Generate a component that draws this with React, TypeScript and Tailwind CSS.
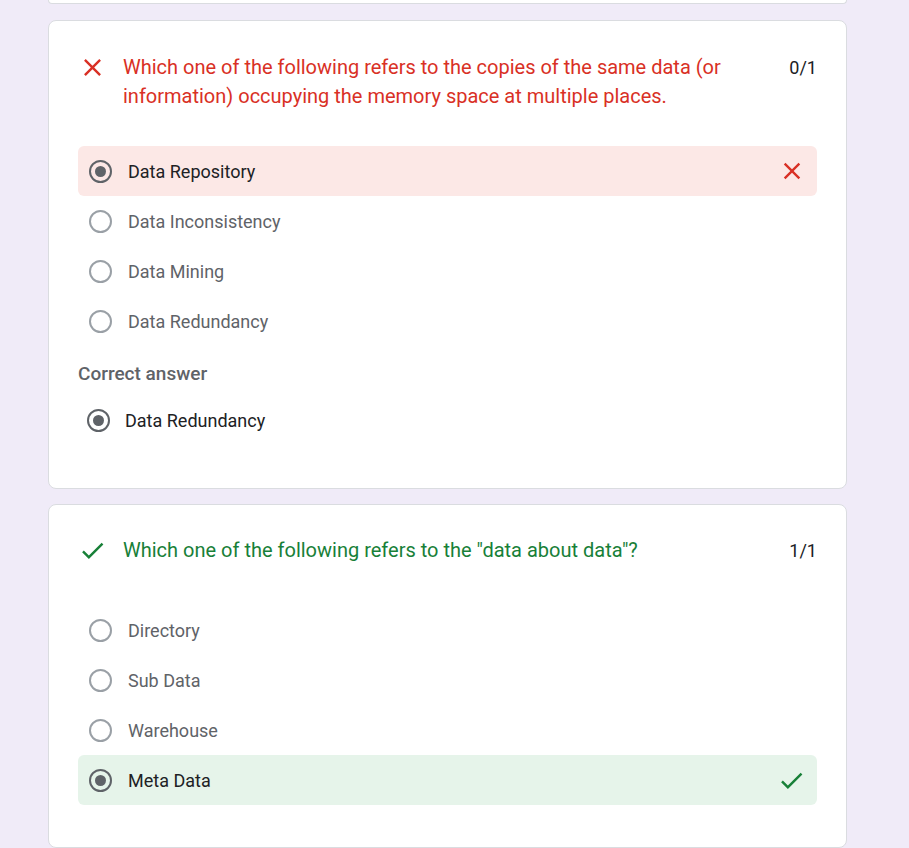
import React from "react";

const font = { fontFamily: "Roboto, 'Liberation Sans', sans-serif" };

function CloseIcon({ className }: { className?: string }) {
  return (
    <svg viewBox="0 0 24 24" className={className} fill="currentColor">
      <path d="M19 6.41L17.59 5 12 10.59 6.41 5 5 6.41 10.59 12 5 17.59 6.41 19 12 13.41 17.59 19 19 17.59 13.41 12z" />
    </svg>
  );
}

function CheckIcon({ className }: { className?: string }) {
  return (
    <svg viewBox="0 0 24 24" className={className} fill="currentColor">
      <path d="M9 16.17L4.83 12l-1.42 1.41L9 19 21 7l-1.41-1.41z" />
    </svg>
  );
}

function Radio({ checked }: { checked?: boolean }) {
  return (
    <div
      className={
        "flex h-[23px] w-[23px] shrink-0 items-center justify-center rounded-full border-2 " +
        (checked ? "border-[#5f6368]" : "border-[#9aa0a6]")
      }
    >
      {checked && <div className="h-[11px] w-[11px] rounded-full bg-[#5f6368]" />}
    </div>
  );
}

type Opt = { label: string; state?: "wrong" | "right" };

function Option({ label, state }: Opt) {
  const bg =
    state === "wrong" ? "bg-[#fce8e6]" : state === "right" ? "bg-[#e6f4ea]" : "";
  return (
    <div className={"flex h-[50px] items-center rounded-[6px] pl-[11px] pr-[11px] " + bg}>
      <Radio checked={!!state} />
      <span
        className={
          "ml-[16px] flex-1 text-[18px] " + (state ? "text-[#202124]" : "text-[#5f6368]")
        }
      >
        {label}
      </span>
      {state === "wrong" && <CloseIcon className="h-[28px] w-[28px] text-[#d93025]" />}
      {state === "right" && <CheckIcon className="h-[29px] w-[29px] text-[#188038]" />}
    </div>
  );
}

export default function App() {
  return (
    <div className="min-h-[848px] w-full bg-[#f0ebf8]" style={font}>
      <div className="mx-[48px] w-[799px]">
        <div className="h-[4px] rounded-b-[8px] border border-t-0 border-[#dadce0] bg-white" />

        <div className="mt-[16px] rounded-[8px] border border-[#dadce0] bg-white px-[29px] pb-[43px] pt-[32px]">
          <div className="flex items-start">
            <CloseIcon className="h-[29px] w-[29px] shrink-0 text-[#d93025]" />
            <div className="ml-[16px] flex-1 pr-[40px] text-[20px] leading-[29px] text-[#d93025]">
              Which one of the following refers to the copies of the same data (or information)
              occupying the memory space at multiple places.
            </div>
            <div className="text-[18px] leading-[29px] text-[#202124]">0/1</div>
          </div>
          <div className="mt-[35px] flex flex-col">
            <Option label="Data Repository" state="wrong" />
            <Option label="Data Inconsistency" />
            <Option label="Data Mining" />
            <Option label="Data Redundancy" />
          </div>
          <div className="mt-[16px] text-[19px] font-medium leading-[24px] text-[#5f6368]">
            Correct answer
          </div>
          <div className="mt-[9px] flex h-[50px] items-center pl-[9px]">
            <Radio checked />
            <span className="ml-[15px] text-[18px] text-[#202124]">Data Redundancy</span>
          </div>
        </div>

        <div className="mt-[15px] rounded-[8px] border border-[#dadce0] bg-white px-[29px] pb-[42px] pt-[31px]">
          <div className="flex items-start">
            <CheckIcon className="h-[29px] w-[29px] shrink-0 text-[#188038]" />
            <div className="ml-[16px] flex-1 pr-[40px] text-[20px] leading-[29px] text-[#188038]">
              Which one of the following refers to the "data about data"?
            </div>
            <div className="text-[18px] leading-[29px] text-[#202124]">1/1</div>
          </div>
          <div className="mt-[40px] flex flex-col">
            <Option label="Directory" />
            <Option label="Sub Data" />
            <Option label="Warehouse" />
            <Option label="Meta Data" state="right" />
          </div>
        </div>
      </div>
    </div>
  );
}
